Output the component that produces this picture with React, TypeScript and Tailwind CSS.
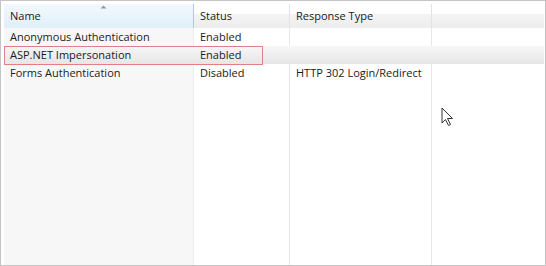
import React from 'react';

const cols = [190, 96, 142];

const rows = [
  { name: 'Anonymous Authentication', status: 'Enabled', type: '' },
  { name: 'ASP.NET Impersonation', status: 'Enabled', type: '', selected: true },
  { name: 'Forms Authentication', status: 'Disabled', type: 'HTTP 302 Login/Redirect' },
];

const Cursor = () => (
  <svg width="14" height="20" viewBox="0 0 14 20" className="absolute left-[440px] top-[106px]">
    <path d="M1 1 L1 16 L4.5 12.5 L7.5 18.5 L9.5 17.5 L6.5 11.5 L11.5 11.5 Z" fill="white" stroke="#333" strokeWidth="1" strokeLinejoin="round" />
  </svg>
);

const App = () => {
  return (
    <div
      className="relative w-[546px] h-[266px] border border-[#c4c4c4] bg-white overflow-hidden text-[11px] text-[#1a1a1a]"
      style={{ fontFamily: '"Open Sans", "Noto Sans", sans-serif' }}
    >
      <div className="flex flex-col h-full pt-[3px] pl-[3px] pr-[1px]">
        {/* header */}
        <div className="flex h-[24px] shrink-0">
          <div
            className="relative flex items-center pl-[6px] border-r border-[#a5cde6] bg-gradient-to-b from-[#f2f9fd] to-[#e0eff9]"
            style={{ width: cols[0] }}
          >
            Name
            <svg width="7" height="4" viewBox="0 0 7 4" className="absolute left-[96px] top-[1px]">
              <path d="M0.5 3.5 L3.5 0.5 L6.5 3.5 Z" fill="#8a9aa8" />
            </svg>
          </div>
          <div
            className="flex items-center pl-[6px] border-r border-[#e3e3e3] bg-[linear-gradient(to_bottom,#ffffff_0%,#ffffff_40%,#f4f4f4_41%,#ededed_100%)]"
            style={{ width: cols[1] }}
          >
            Status
          </div>
          <div
            className="flex items-center pl-[6px] border-r border-[#e3e3e3] bg-[linear-gradient(to_bottom,#ffffff_0%,#ffffff_40%,#f4f4f4_41%,#ededed_100%)]"
            style={{ width: cols[2] }}
          >
            Response Type
          </div>
          <div className="flex-1 bg-[linear-gradient(to_bottom,#ffffff_0%,#ffffff_40%,#f4f4f4_41%,#ededed_100%)]" />
        </div>

        {/* body */}
        <div className="relative flex-1 flex">
          <div className="bg-[#f7f7f7] border-r border-[#ececec]" style={{ width: cols[0] }} />
          <div className="border-r border-[#e6e6e6]" style={{ width: cols[1] }} />
          <div className="border-r border-[#e6e6e6]" style={{ width: cols[2] }} />
          <div className="flex-1" />

          <div className="absolute inset-x-0 top-0 flex flex-col">
            {rows.map((r) => (
              <div
                key={r.name}
                className={`relative flex h-[18px] items-center whitespace-nowrap ${
                  r.selected ? 'bg-[linear-gradient(to_bottom,#f6f6f6,#e6e6e6)]' : ''
                }`}
              >
                <div className="pl-[6px] truncate" style={{ width: cols[0] }}>{r.name}</div>
                <div className="pl-[6px]" style={{ width: cols[1] }}>{r.status}</div>
                <div className="pl-[6px]" style={{ width: cols[2] }}>{r.type}</div>
                {r.selected && (
                  <div className="absolute left-0 top-0 w-[259px] h-[19px] border border-[#e27f84]" />
                )}
              </div>
            ))}
          </div>
        </div>
      </div>
      <Cursor />
    </div>
  );
};

export default App;
